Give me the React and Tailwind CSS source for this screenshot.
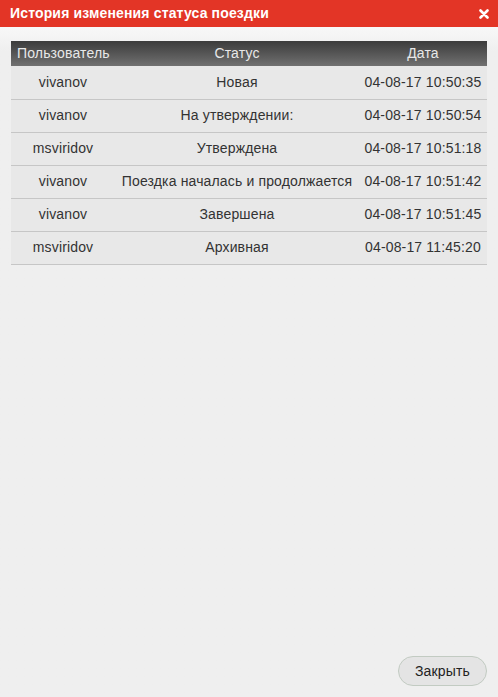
import React from "react";

const history = [
  { user: "vivanov", status: "Новая", date: "04-08-17 10:50:35" },
  { user: "vivanov", status: "На утверждении:", date: "04-08-17 10:50:54" },
  { user: "msviridov", status: "Утверждена", date: "04-08-17 10:51:18" },
  { user: "vivanov", status: "Поездка началась и продолжается", date: "04-08-17 10:51:42" },
  { user: "vivanov", status: "Завершена", date: "04-08-17 10:51:45" },
  { user: "msviridov", status: "Архивная", date: "04-08-17 11:45:20" },
];

export default function App() {
  return (
    <div className="w-[498px] h-[697px] flex flex-col bg-[#efefef] font-['Liberation_Sans',Arial,sans-serif] text-[14px] tracking-[0.15px] text-[#333]">
      <div className="h-[27px] shrink-0 bg-[#e33526] flex items-center justify-between pl-[10px] pr-[9px]">
        <span className="text-white font-bold text-[14px]">История изменения статуса поездки</span>
        <svg width="10" height="10" viewBox="0 0 10 10">
          <path d="M1.5 1.5 L8.5 8.5 M8.5 1.5 L1.5 8.5" stroke="white" strokeWidth="2.6" strokeLinecap="round" />
        </svg>
      </div>

      <div className="flex-1 flex flex-col bg-gradient-to-b from-[#f8f8f8] to-[#efefef] to-[24px]">
        <div className="pt-[14px] px-[11px]">
          <table className="w-[476px] table-fixed border-collapse">
            <thead>
              <tr className="h-[25px] bg-gradient-to-b from-[#3c3c3c] to-[#717171] text-[#e8e8e8]">
                <th className="w-[104px] font-normal text-left pl-[6px] whitespace-nowrap">Пользователь</th>
                <th className="w-[244px] font-normal text-center">Статус</th>
                <th className="w-[128px] font-normal text-center">Дата</th>
              </tr>
            </thead>
            <tbody>
              {history.map((row, i) => (
                <tr key={i} className="h-[33px] bg-[#e8e8e8] border-b border-[#c6c6c6]">
                  <td className="text-center">{row.user}</td>
                  <td className="text-center whitespace-nowrap">{row.status}</td>
                  <td className="text-center whitespace-nowrap">{row.date}</td>
                </tr>
              ))}
            </tbody>
          </table>
        </div>

        <div className="mt-auto flex justify-end pr-[11px] pb-[11px]">
          <button className="w-[89px] h-[30px] rounded-full bg-[#e4e4e4] border border-[#c2cbc2] text-[#222] text-[14px]">
            Закрыть
          </button>
        </div>
      </div>
    </div>
  );
}
